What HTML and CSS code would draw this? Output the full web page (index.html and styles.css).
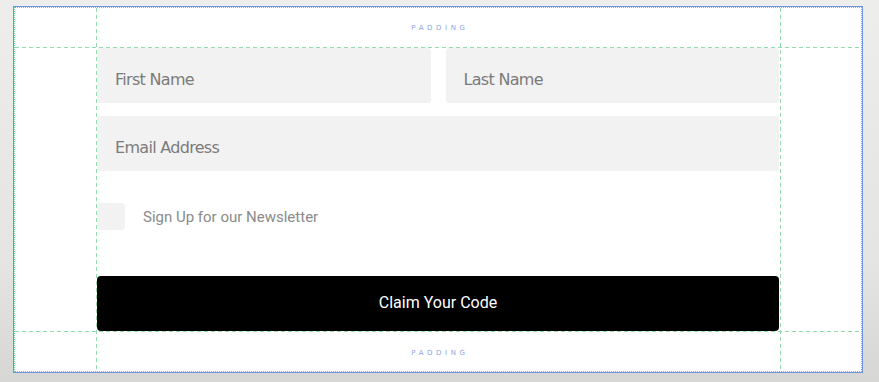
FILE: index.html
```html
<!DOCTYPE html>
<html>
<head>
<meta charset="utf-8">
<link rel="stylesheet" href="styles.css">
</head>
<body>
<div class="frame">
  <div class="inner">
    <div class="pad-area top"><span class="pad-label">PADDING</span></div>
    <form class="content">
      <div class="row">
        <div class="field">First Name</div>
        <div class="field">Last Name</div>
      </div>
      <div class="field full">Email Address</div>
      <label class="check-row">
        <span class="checkbox"></span>
        <span class="check-label">Sign Up for our Newsletter</span>
      </label>
      <div class="button">Claim Your Code</div>
    </form>
    <div class="pad-area bottom"><span class="pad-label">PADDING</span></div>
    <div class="guide h h-top"></div>
    <div class="guide h h-bottom"></div>
    <div class="guide v v-left"></div>
    <div class="guide v v-right"></div>
  </div>
</div>
</body>
</html>
```
FILE: styles.css
```css
html, body {
  margin: 0;
  height: 100%;
}
body {
  background: linear-gradient(180deg, #ededeb 0%, #e4e4e2 70%, #d6d6d4 100%);
  padding: 6px 0 0 13px;
  box-sizing: border-box;
  font-family: "Roboto", "Liberation Sans", sans-serif;
}
.frame {
  width: 850px;
  height: 367px;
  box-sizing: border-box;
  border: 1px solid #6d93df;
  background: #fff;
}
.inner {
  position: relative;
  height: 100%;
  box-sizing: border-box;
  border: 1px dotted #5fd392;
  display: flex;
  flex-direction: column;
}
.pad-area {
  height: 40px;
  display: flex;
  align-items: center;
  justify-content: center;
}
.pad-label {
  font-family: "DejaVu Sans", sans-serif;
  font-size: 7px;
  letter-spacing: 3.6px;
  color: #8fa5e4;
  margin-left: 4px;
}
.pad-area.top .pad-label { margin-top: 0; }
.pad-area.bottom .pad-label { margin-top: 4px; }
.content {
  margin: 0 82px 0 82px;
  height: 283px;
  display: flex;
  flex-direction: column;
}
.row {
  display: flex;
  gap: 15px;
  margin-bottom: 13px;
}
.field {
  flex: 1;
  height: 55px;
  background: #f2f2f2;
  border-radius: 3px;
  box-sizing: border-box;
  padding: 7px 0 0 18px;
  display: flex;
  align-items: center;
  font-family: "DejaVu Sans", sans-serif;
  font-size: 16px;
  letter-spacing: -0.7px;
  color: #7b7b7b;
}
.field.full { flex: none; }
.check-row {
  display: flex;
  align-items: center;
  margin-top: 32px;
  height: 27px;
}
.checkbox {
  width: 28px;
  height: 27px;
  background: #f2f2f2;
  border-radius: 4px;
}
.check-label {
  margin-left: 18px;
  font-size: 15px;
  color: #8a8a8a;
}
.button {
  margin-top: 46px;
  height: 55px;
  background: #000;
  border-radius: 4px;
  color: #fff;
  font-size: 16px;
  display: flex;
  align-items: center;
  justify-content: center;
  padding-bottom: 2px;
  box-sizing: border-box;
}
.guide {
  position: absolute;
  pointer-events: none;
}
.guide.h {
  left: 0;
  right: 0;
  height: 1px;
  background: repeating-linear-gradient(90deg, #93dcb0 0 4px, transparent 4px 7px);
}
.h-top { top: 39px; }
.h-bottom { top: 323px; }
.guide.v {
  top: 0;
  bottom: 0;
  width: 1px;
  background: repeating-linear-gradient(180deg, #93dcb0 0 4px, transparent 4px 7px);
}
.v-left { left: 81px; }
.v-right { left: 765px; }
```
